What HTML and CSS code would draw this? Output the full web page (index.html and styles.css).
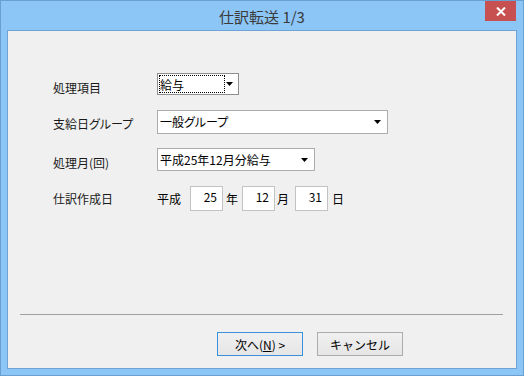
FILE: index.html
```html
<!DOCTYPE html>
<html lang="ja">
<head>
  <meta charset="UTF-8" />
  <title>仕訳転送 1/3</title>
  <link rel="stylesheet" href="styles.css">
</head>
<body>
  <div class="window">
    <div class="titlebar">
      <span class="title">仕訳転送 1/3</span>
      <button class="close" title="閉じる">
        <svg width="10" height="9" viewBox="0 0 10 9"><path d="M1 0.5 L9 8.5 M9 0.5 L1 8.5" stroke="#fff" stroke-width="2"/></svg>
      </button>
    </div>
    <div class="client">
      <div class="form">
        <div class="row row-item">
          <span class="label">処理項目</span>
          <div class="combo combo-item">
            <span class="value focus">給与</span>
            <svg class="arrow" width="7" height="4" viewBox="0 0 7 4"><polygon points="0,0 7,0 3.5,4" fill="#000"/></svg>
          </div>
        </div>
        <div class="row row-group">
          <span class="label">支給日グループ</span>
          <div class="combo combo-group">
            <span class="value">一般グループ</span>
            <svg class="arrow" width="7" height="4" viewBox="0 0 7 4"><polygon points="0,0 7,0 3.5,4" fill="#000"/></svg>
          </div>
        </div>
        <div class="row row-month">
          <span class="label">処理月(回)</span>
          <div class="combo combo-month">
            <span class="value">平成25年12月分給与</span>
            <svg class="arrow" width="7" height="4" viewBox="0 0 7 4"><polygon points="0,0 7,0 3.5,4" fill="#000"/></svg>
          </div>
        </div>
        <div class="row row-date">
          <span class="label">仕訳作成日</span>
          <div class="date">
            <span class="era">平成</span>
            <span class="num num-y">25</span>
            <span class="unit u-y">年</span>
            <span class="num num-m">12</span>
            <span class="unit u-m">月</span>
            <span class="num num-d">31</span>
            <span class="unit u-d">日</span>
          </div>
        </div>
      </div>
      <div class="sep"></div>
      <div class="buttons">
        <button class="btn default">次へ(<u>N</u>) &gt;</button>
        <button class="btn">キャンセル</button>
      </div>
    </div>
  </div>
</body>
</html>
```

FILE: styles.css
```css
* {
  box-sizing: border-box;
  margin: 0;
  padding: 0;
}
body {
  font-family: "Noto Sans CJK JP", "Noto Sans", sans-serif;
  font-size: 12px;
  font-feature-settings: "palt";
  color: #000;
  background: #8cc6f7;
}
.window {
  width: 524px;
  height: 376px;
  background: #8cc6f7;
  border: 1px solid #6a9fd2;
  display: flex;
  flex-direction: column;
  position: relative;
}
.titlebar {
  height: 29px;
  display: flex;
  justify-content: center;
  align-items: center;
}
.title {
  font-size: 15px;
  color: #3a3a3a;
  line-height: 20px;
  margin-top: 2px;
  font-feature-settings: normal;
}
.close {
  position: absolute;
  top: 0;
  right: 7px;
  width: 31px;
  height: 20px;
  background: #c75050;
  border: none;
  display: flex;
  align-items: center;
  justify-content: center;
}
.client {
  flex: 1;
  margin: 0 6px 6px 6px;
  border: 1px solid #6fa3d6;
  background: #f0f0f0;
  display: flex;
  flex-direction: column;
}
.form {
  padding: 42px 0 0 45px;
  display: flex;
  flex-direction: column;
}
.row {
  display: flex;
  align-items: flex-start;
}
.row-item { height: 22px; }
.row-group { height: 24px; margin-top: 15px; }
.row-month { height: 23px; margin-top: 14px; }
.row-date { height: 25px; margin-top: 15px; }
.label {
  width: 104px;
  line-height: 16px;
  color: #1a1a1a;
}
.row-item .label { margin-top: 7px; }
.row-group .label { margin-top: 6px; }
.row-month .label { margin-top: 7px; }
.row-date .label { margin-top: 5px; }
.combo {
  background: #fff;
  border: 1px solid #acacac;
  display: flex;
  align-items: center;
  justify-content: space-between;
  padding: 0 6px 0 1px;
}
.combo-item {
  width: 82px;
  height: 22px;
  border-color: #8e8e8e;
  padding: 1px 5px 1px 1px;
  align-items: stretch;
}
.combo-group {
  width: 231px;
  height: 24px;
}
.combo-month {
  width: 158px;
  height: 23px;
}
.value {
  line-height: 18px;
  padding-left: 1px;
}
.value.focus {
  width: 66px;
  border: 1px dotted #000;
  padding-left: 0;
}
.arrow {
  flex: none;
  align-self: center;
}
.date {
  display: flex;
  align-items: flex-start;
}
.era, .unit {
  line-height: 16px;
  margin-top: 5px;
}
.era {
  width: 24px;
}
.num {
  width: 33px;
  height: 25px;
  background: #fff;
  border: 1px solid #c3c3c3;
  text-align: right;
  padding: 2px 5px 0 0;
  line-height: 16px;
}
.num-y { margin-left: 9px; }
.num-m { margin-left: 4px; }
.num-d { margin-left: 6px; }
.u-y { margin-left: 3px; }
.u-m { margin-left: 2px; }
.u-d { margin-left: 4px; }
.sep {
  margin: auto 13px 17px 12px;
  height: 1px;
  background: #a0a0a0;
}
.buttons {
  display: flex;
  gap: 14px;
  padding-left: 209px;
  margin-bottom: 12px;
}
.btn {
  width: 86px;
  height: 24px;
  font-family: inherit;
  font-size: 12px;
  color: #000;
  background: linear-gradient(#f0f0f0, #e5e5e5);
  border: 1px solid #acacac;
}
.btn.default {
  border-color: #3c8fdc;
}
```
